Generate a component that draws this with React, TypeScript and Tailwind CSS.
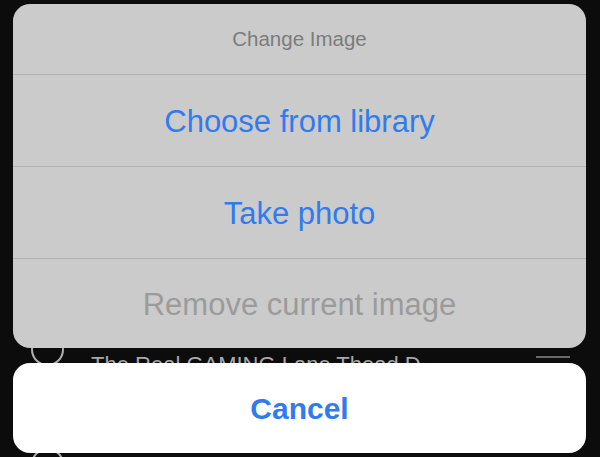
import React from "react";

export default function App() {
  const font = { fontFamily: '"Liberation Sans", Arial, sans-serif' };
  return (
    <div className="relative w-[600px] h-[457px] overflow-hidden bg-[#0c0c0c]" style={font}>
      {/* background list partially visible behind the sheet */}
      <div className="absolute left-0 top-0 w-full h-full">
        <div className="absolute left-[31px] top-[333px] w-[33px] h-[33px] rounded-full border-2 border-[#b0b0b0]" />
        <div className="absolute left-[91px] top-[354px] text-[22px] leading-none text-[#a8a8a8] whitespace-nowrap">
          The Real GAMING Lane Thead D
        </div>
        <div className="absolute left-[536px] top-[356px] w-[34px] h-[2px] bg-[#6a6a6a]" />
        <div className="absolute left-[31px] top-[448px] w-[33px] h-[33px] rounded-full border-2 border-[#b0b0b0]" />
      </div>

      <div className="relative flex flex-col pt-[4px] pl-[13px]">
        <div className="w-[573px] h-[344px] rounded-[17px] bg-[#cbcbcb] flex flex-col overflow-hidden">
          <div className="h-[70px] pt-[1px] flex items-center justify-center text-[20.5px] text-[#7b7b7b]">
            Change Image
          </div>
          <div className="h-px bg-[#b4b4b4]" />
          <div className="h-[91px] pt-[3px] flex items-center justify-center text-[31px] text-[#2f7bef]">
            Choose from library
          </div>
          <div className="h-px bg-[#b4b4b4]" />
          <div className="h-[91px] pt-[3px] flex items-center justify-center text-[31px] text-[#2f7bef]">
            Take photo
          </div>
          <div className="h-px bg-[#b4b4b4]" />
          <div className="h-[89px] pt-[3px] flex items-center justify-center text-[31px] text-[#9b9b9b]">
            Remove current image
          </div>
        </div>
        <div className="mt-[15px] w-[573px] h-[90px] pt-[1px] rounded-[17px] bg-white flex items-center justify-center text-[30px] font-semibold text-[#2f7bef]">
          Cancel
        </div>
      </div>
    </div>
  );
}
